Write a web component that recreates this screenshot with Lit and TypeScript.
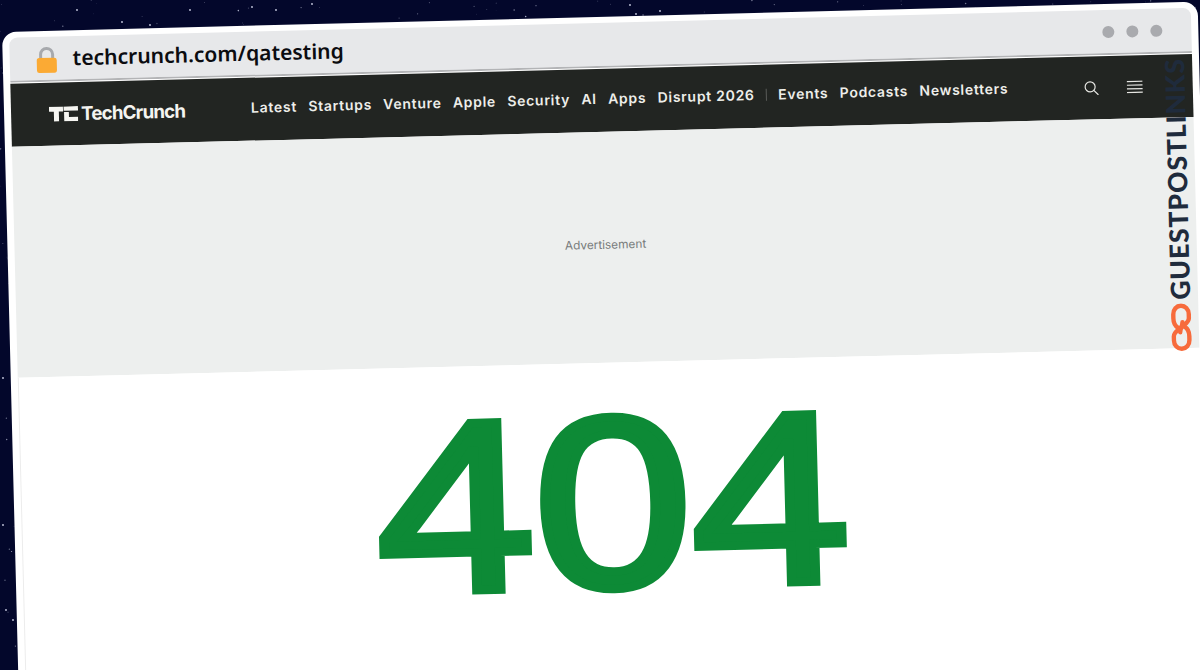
import { LitElement, html, css, svg } from "lit";
import { customElement } from "lit/decorators.js";

function stars() {
  let seed = 7;
  const r = () => ((seed = (seed * 16807) % 2147483647) / 2147483647);
  const out = [];
  for (let i = 0; i < 130; i++) {
    const onTop = i < 95;
    out.push({
      x: onTop ? r() * 1200 : r() * 20,
      y: onTop ? r() * 34 : 40 + r() * 630,
      rad: 0.3 + r() * 0.5,
      o: 0.25 + r() * 0.5,
    });
  }
  for (const [x, y] of [[630, 5], [660, 11], [636, 14], [252, 7], [190, 10], [122, 22], [150, 25], [3, 378], [3, 525], [13, 620], [6, 610], [276, 10], [312, 4], [77, 10]]) {
    out.push({ x, y, rad: 0.9, o: 0.9 });
  }
  return out;
}

const NAV_A = ["Latest", "Startups", "Venture", "Apple", "Security", "AI", "Apps", "Disrupt 2026"];
const NAV_B = ["Events", "Podcasts", "Newsletters"];

@customElement("app-root")
export class AppRoot extends LitElement {
  static styles = css`
    :host {
      display: block;
      position: relative;
      height: 670px;
      overflow: hidden;
      background: #03072b;
      font-family: "Inter", "Liberation Sans", sans-serif;
    }
    .sky {
      position: absolute;
      inset: 0;
      width: 1200px;
      height: 670px;
    }
    .window {
      position: relative;
      box-sizing: border-box;
      width: 1196px;
      height: 720px;
      margin-left: 2px;
      top: 32px;
      padding: 6px 7px 0;
      background: #fff;
      border-radius: 14px 14px 0 0;
      transform: rotate(-1.45deg);
      transform-origin: 0 0;
      display: flex;
      flex-direction: column;
    }
    .chrome {
      height: 45px;
      flex: none;
      box-sizing: border-box;
      background: #e7e8ea;
      border-radius: 8px 8px 0 0;
      border-bottom: 2px solid #b3b4b6;
      display: flex;
      align-items: center;
      padding: 0 29px 0 26px;
    }
    .lock {
      width: 22px;
      height: 28px;
      flex: none;
      margin-top: 2px;
    }
    .url {
      margin-left: 15px;
      font: 600 21.05px "Noto Sans", "Open Sans", sans-serif;
      color: #0b0c10;
      line-height: 1;
      margin-bottom: 1px;
    }
    .dots {
      margin-left: auto;
      display: flex;
      gap: 12px;
    }
    .dot {
      width: 12px;
      height: 12px;
      border-radius: 50%;
      background: #a9aaae;
    }
    .band {
      margin-top: 1px;
      height: 63px;
      flex: none;
      background: #222522;
      display: flex;
      align-items: center;
      padding-left: 38px;
      padding-right: 50px;
      color: #eeeeea;
    }
    .logo {
      display: flex;
      align-items: center;
      gap: 3px;
      width: 202px;
      flex: none;
    }
    .mark {
      width: 29px;
      height: 15px;
    }
    .word {
      font-weight: 700;
      font-size: 18.7px;
      letter-spacing: -0.8px;
      color: #f4f4f0;
    }
    nav {
      display: flex;
      align-items: center;
      gap: 11.3px;
      font-weight: 600;
      font-size: 14px;
      letter-spacing: 0.72px;
      white-space: nowrap;
      margin-bottom: 4px;
    }
    .sep {
      width: 1px;
      height: 12px;
      background: #5a5c59;
    }
    .icons {
      margin-left: auto;
      display: flex;
      align-items: center;
      gap: 28px;
    }
    .ad {
      height: 231px;
      box-sizing: border-box;
      padding-bottom: 6px;
      flex: none;
      background: #edefee;
      display: flex;
      align-items: center;
      justify-content: center;
      font-size: 11.8px;
      color: #777b7b;
    }
    .page {
      flex: 1;
      background: #fff;
      border-left: 1px solid #ececec;
      display: flex;
      justify-content: center;
      padding-top: 12px;
    }
    .big {
      font-family: "Liberation Sans", Arial, sans-serif;
      font-weight: 400;
      font-size: 243px;
      line-height: 1.05;
      color: #0d8a36;
      -webkit-text-stroke: 8.5px #0d8a36;
      transform: scaleX(1.165);
    }
    .mark-wm {
      position: absolute;
      top: 56px;
      right: 12px;
      height: 294px;
      width: 26px;
      display: flex;
      flex-direction: column;
      align-items: center;
    }
    .wm-text {
      writing-mode: vertical-rl;
      transform: rotate(180deg);
      font: 900 26.5px "Lato", "Noto Sans", sans-serif;
      line-height: 26px;
      color: #1f2b3c;
      letter-spacing: 0.9px;
      white-space: nowrap;
    }
    .wm-icon {
      width: 21px;
      height: 48px;
      margin-top: 4px;
      flex: none;
    }
  `;

  render() {
    return html`
      <svg class="sky" viewBox="0 0 1200 670">
        ${stars().map(
          (s) => svg`<circle cx=${s.x} cy=${s.y} r=${s.rad} fill="#dfe3f5" opacity=${s.o}></circle>`
        )}
      </svg>
      <div class="window">
        <div class="chrome">
          <svg class="lock" viewBox="0 0 22 28">
            <path d="M5 14V8.500a6 6 0 0 1 12 0V14" fill="none" stroke="#a7a9ad" stroke-width="3"></path>
            <rect x="1" y="12" width="20" height="15" rx="2.500" fill="#fbaa34"></rect>
          </svg>
          <span class="url">techcrunch.com/qatesting</span>
          <div class="dots">
            <span class="dot"></span><span class="dot"></span><span class="dot"></span>
          </div>
        </div>
        <div class="band">
          <div class="logo">
            <svg class="mark" viewBox="0 0 29 15" fill="#f6f6f2">
              <path d="M0 0h14v5H9.800v10H4.800V5H0z"></path>
              <path d="M14.600 0H29v4.400H14.600z"></path>
              <path d="M15 5.600h4.800v5H29V15H15z"></path>
            </svg>
            <span class="word">TechCrunch</span>
          </div>
          <nav>
            ${NAV_A.map((n) => html`<span>${n}</span>`)}
            <span class="sep"></span>
            ${NAV_B.map((n) => html`<span>${n}</span>`)}
          </nav>
          <div class="icons">
            <svg width="15" height="15" viewBox="0 0 15 15" fill="none" stroke="#e6e6e2" stroke-width="1.2">
              <circle cx="6.400" cy="6.400" r="5"></circle>
              <path d="M10 10l4.200 4.200" stroke-linecap="round"></path>
            </svg>
            <svg width="16" height="13" viewBox="0 0 16 13" fill="none" stroke="#e6e6e2" stroke-width="1.2">
              <path d="M0 1h16M0 4.700h16M0 8.400h16M0 12h16"></path>
            </svg>
          </div>
        </div>
        <div class="ad">Advertisement</div>
        <div class="page"><div class="big">404</div></div>
        <div class="mark-wm">
          <span class="wm-text">GUESTPOSTLINKS</span>
          <svg class="wm-icon" viewBox="0 0 20.500 48" fill="none" stroke="#f76b3c" stroke-width="4.400" stroke-linecap="round">
            <path d="M7 24.500C4 22.500 2.500 19 2.500 15V11C2.500 6 6 2.500 10.250 2.500S18 6 18 11V15C18 19 14 21 11.500 23C9 25 9 27 9 29"></path>
            <path d="M13.500 23.500C16.500 25.500 18 29 18 33V37C18 42 14.500 45.500 10.250 45.500S2.500 42 2.500 37V33C2.500 29 6.500 27 9 25C11.500 23 11.500 21 11.500 19"></path>
          </svg>
        </div>
      </div>
    `;
  }
}
